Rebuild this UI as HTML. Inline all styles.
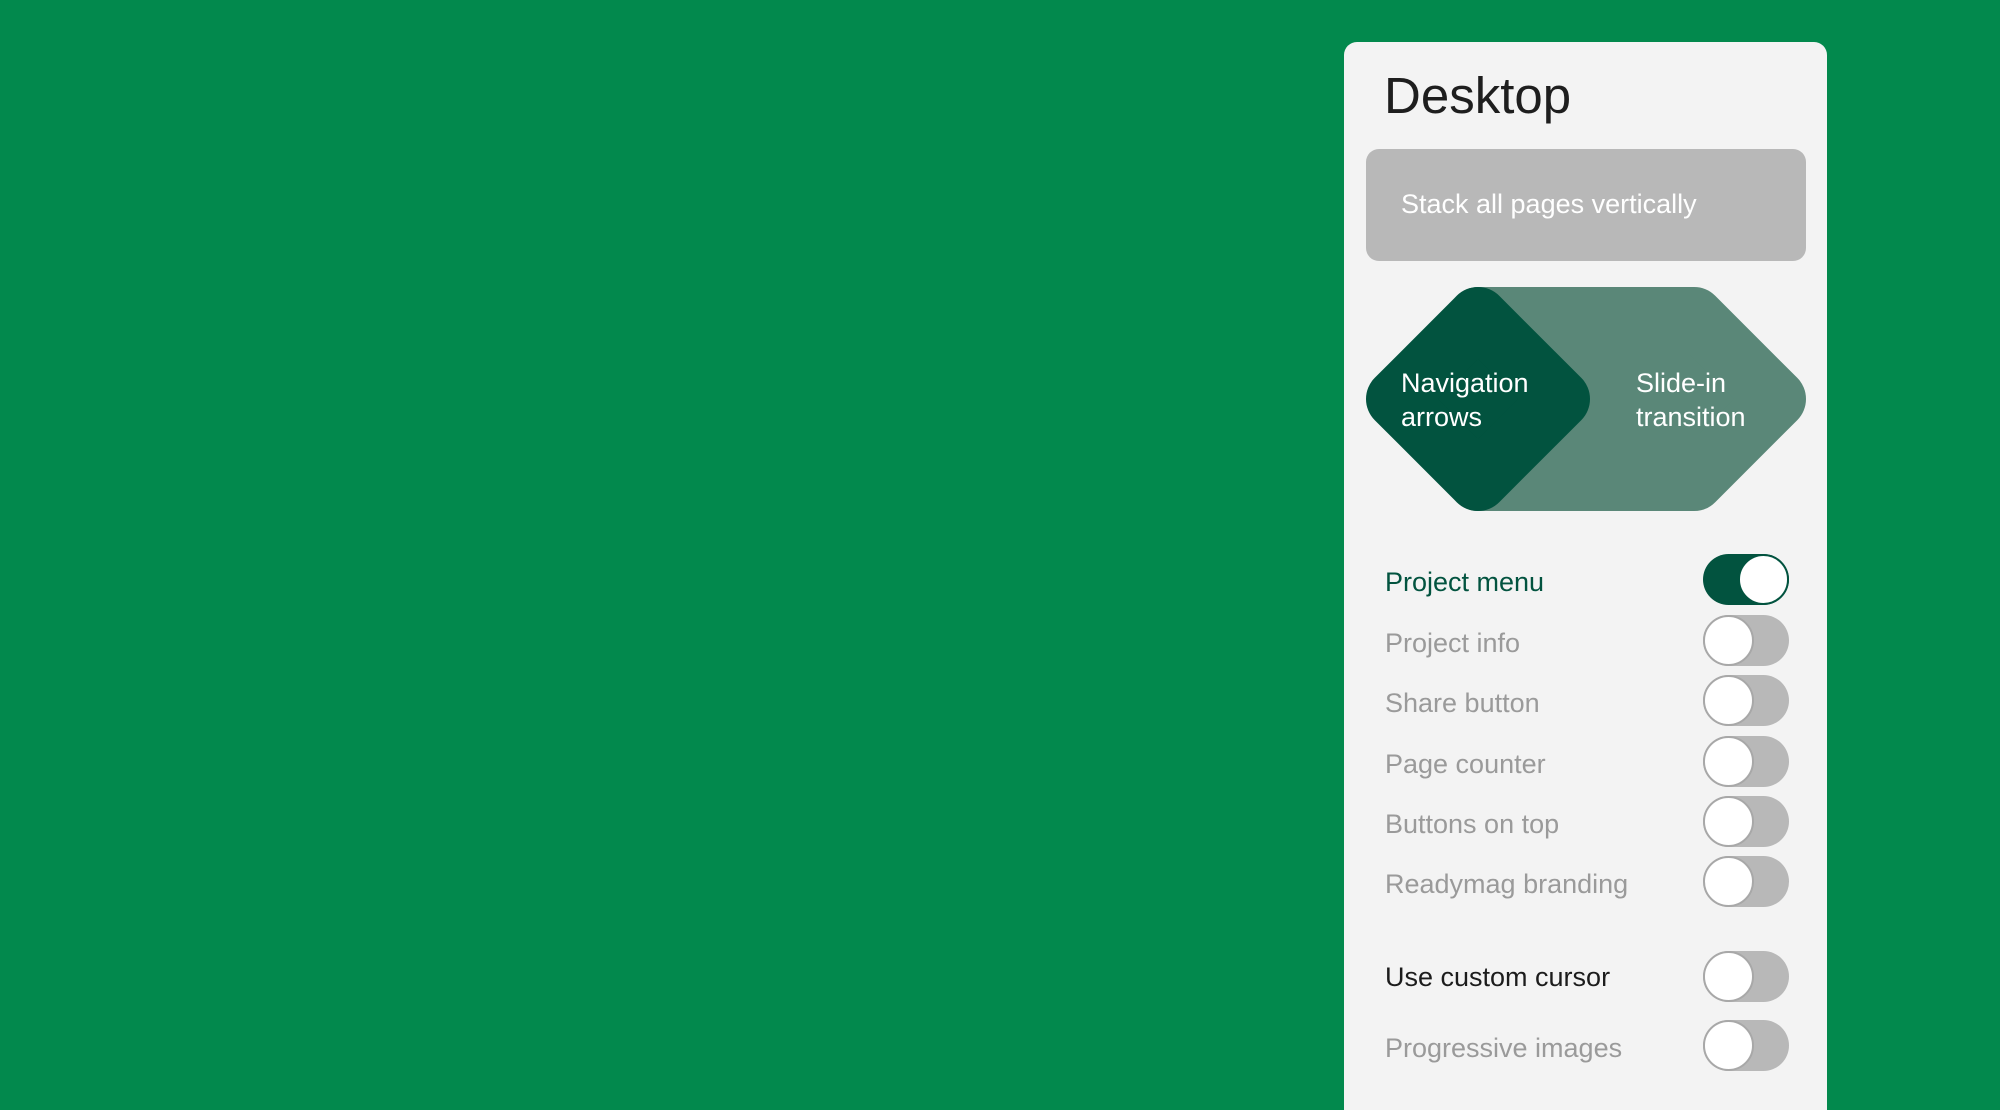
<!DOCTYPE html>
<html><head><meta charset="utf-8"><style>
html,body{margin:0;padding:0;width:2000px;height:1110px;overflow:hidden}
body{background:#02894d;position:relative;font-family:"Liberation Sans",sans-serif}
.panel{position:absolute;left:1344px;top:42px;width:483px;height:1068px;background:#f3f3f3;border-radius:13px 13px 0 0}
.t{position:absolute;white-space:nowrap}
.row{position:absolute;left:1385px;font-size:27px;line-height:30px}
.tg{position:absolute;left:1703px;width:86px;height:51px;border-radius:26px;background:#b8b8b8}
.tg::after{content:"";position:absolute;left:0;top:0;width:47px;height:47px;border-radius:50%;background:#fff;border:2px solid #a8a8a8;box-sizing:content-box}
.tg.on{background:#02533f}
.tg.on::after{left:35px;border-color:#02533f}
</style></head><body>
<div class="panel"></div>
<div class="t" style="left:1384px;top:66px;font-size:51px;color:#1e1e1e">Desktop</div>
<div style="position:absolute;left:1366px;top:149px;width:440px;height:112px;background:#b8b8b8;border-radius:13px"></div>
<div class="t" style="left:1401px;top:189px;font-size:27px;color:#fff">Stack all pages vertically</div>
<svg style="position:absolute;left:0;top:0" width="2000" height="1110">
<polygon points="1478,317 1694,317 1776,399 1694,481 1478,481" fill="#5a8778" stroke="#5a8778" stroke-width="60" stroke-linejoin="round"/>
<polygon points="1478,317 1560,399 1478,481 1396,399" fill="#02533f" stroke="#02533f" stroke-width="60" stroke-linejoin="round"/>
</svg>
<div class="t" style="left:1401px;top:366px;font-size:27px;line-height:34px;color:#fff">Navigation<br>arrows</div>
<div class="t" style="left:1636px;top:366px;font-size:27px;line-height:34px;color:#fff">Slide-in<br>transition</div>

<div class="row" style="top:567px;color:#02533f">Project menu</div><div class="tg on" style="top:554px"></div>
<div class="row" style="top:628px;color:#9a9a9a">Project info</div><div class="tg" style="top:615px"></div>
<div class="row" style="top:688px;color:#9a9a9a">Share button</div><div class="tg" style="top:675px"></div>
<div class="row" style="top:749px;color:#9a9a9a">Page counter</div><div class="tg" style="top:736px"></div>
<div class="row" style="top:809px;color:#9a9a9a">Buttons on top</div><div class="tg" style="top:796px"></div>
<div class="row" style="top:869px;color:#9a9a9a">Readymag branding</div><div class="tg" style="top:856px"></div>
<div class="row" style="top:962px;color:#1c1c1c">Use custom cursor</div><div class="tg" style="top:951px"></div>
<div class="row" style="top:1033px;color:#9a9a9a">Progressive images</div><div class="tg" style="top:1020px"></div>
</body></html>
